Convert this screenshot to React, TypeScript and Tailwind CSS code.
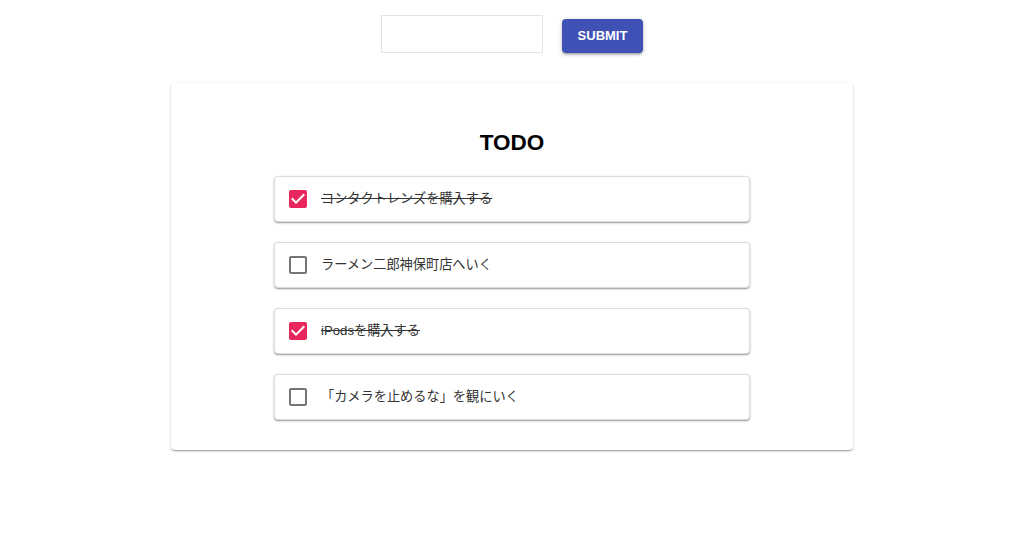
import React from "react";

const todos = [
  { text: "コンタクトレンズを購入する", done: true },
  { text: "ラーメン二郎神保町店へいく", done: false },
  { text: "iPodsを購入する", done: true },
  { text: "「カメラを止めるな」を観にいく", done: false },
];

function CheckIcon({ checked }: { checked: boolean }) {
  return checked ? (
    <svg width="24" height="24" viewBox="0 0 24 24" className="shrink-0">
      <path
        fill="#e8275c"
        d="M19 3H5c-1.11 0-2 .9-2 2v14c0 1.1.89 2 2 2h14c1.11 0 2-.9 2-2V5c0-1.1-.89-2-2-2zm-9 14l-5-5 1.41-1.41L10 14.17l7.59-7.59L19 8l-9 9z"
      />
    </svg>
  ) : (
    <svg width="24" height="24" viewBox="0 0 24 24" className="shrink-0">
      <path
        fill="#757575"
        d="M19 5v14H5V5h14m0-2H5c-1.1 0-2 .9-2 2v14c0 1.1.9 2 2 2h14c1.1 0 2-.9 2-2V5c0-1.1-.9-2-2-2z"
      />
    </svg>
  );
}

export default function App() {
  return (
    <div
      className="w-[1024px] h-[544px] bg-white"
      style={{ fontFamily: '"Liberation Sans", "Noto Sans CJK JP", sans-serif' }}
    >
      <div className="flex justify-center items-end gap-[19px] pt-[15px]">
        <input
          className="w-[162px] h-[38px] border border-[#e3e3e3] outline-none px-2 text-sm"
          type="text"
        />
        <button className="w-[81px] h-[34px] rounded-[4px] bg-[#3f51b5] text-white text-[13px] font-bold shadow-[0_1px_5px_rgba(0,0,0,0.2),0_2px_2px_rgba(0,0,0,0.14),0_3px_1px_-2px_rgba(0,0,0,0.12)]">
          SUBMIT
        </button>
      </div>
      <div className="mx-auto mt-[30px] w-[682px] h-[367px] rounded-[4px] bg-white shadow-[0_1px_3px_rgba(0,0,0,0.2),0_1px_1px_rgba(0,0,0,0.14),0_2px_1px_-1px_rgba(0,0,0,0.12)] pt-[46px]">
        <h1 className="text-center text-[22.5px] leading-[28px] font-bold text-black">TODO</h1>
        <div className="mt-[19px] flex flex-col items-center gap-[20px]">
          {todos.map((t, i) => (
            <div
              key={i}
              className="w-[476px] h-[46px] flex items-center pl-[11px] gap-[11px] rounded-[4px] border border-[#dcdcdc] bg-white shadow-[0_1px_3px_rgba(0,0,0,0.2),0_1px_1px_rgba(0,0,0,0.14),0_2px_1px_-1px_rgba(0,0,0,0.12)]"
            >
              <CheckIcon checked={t.done} />
              <span className={`text-[13.2px] text-[#333] ${t.done ? "line-through" : ""}`}>{t.text}</span>
            </div>
          ))}
        </div>
      </div>
    </div>
  );
}
